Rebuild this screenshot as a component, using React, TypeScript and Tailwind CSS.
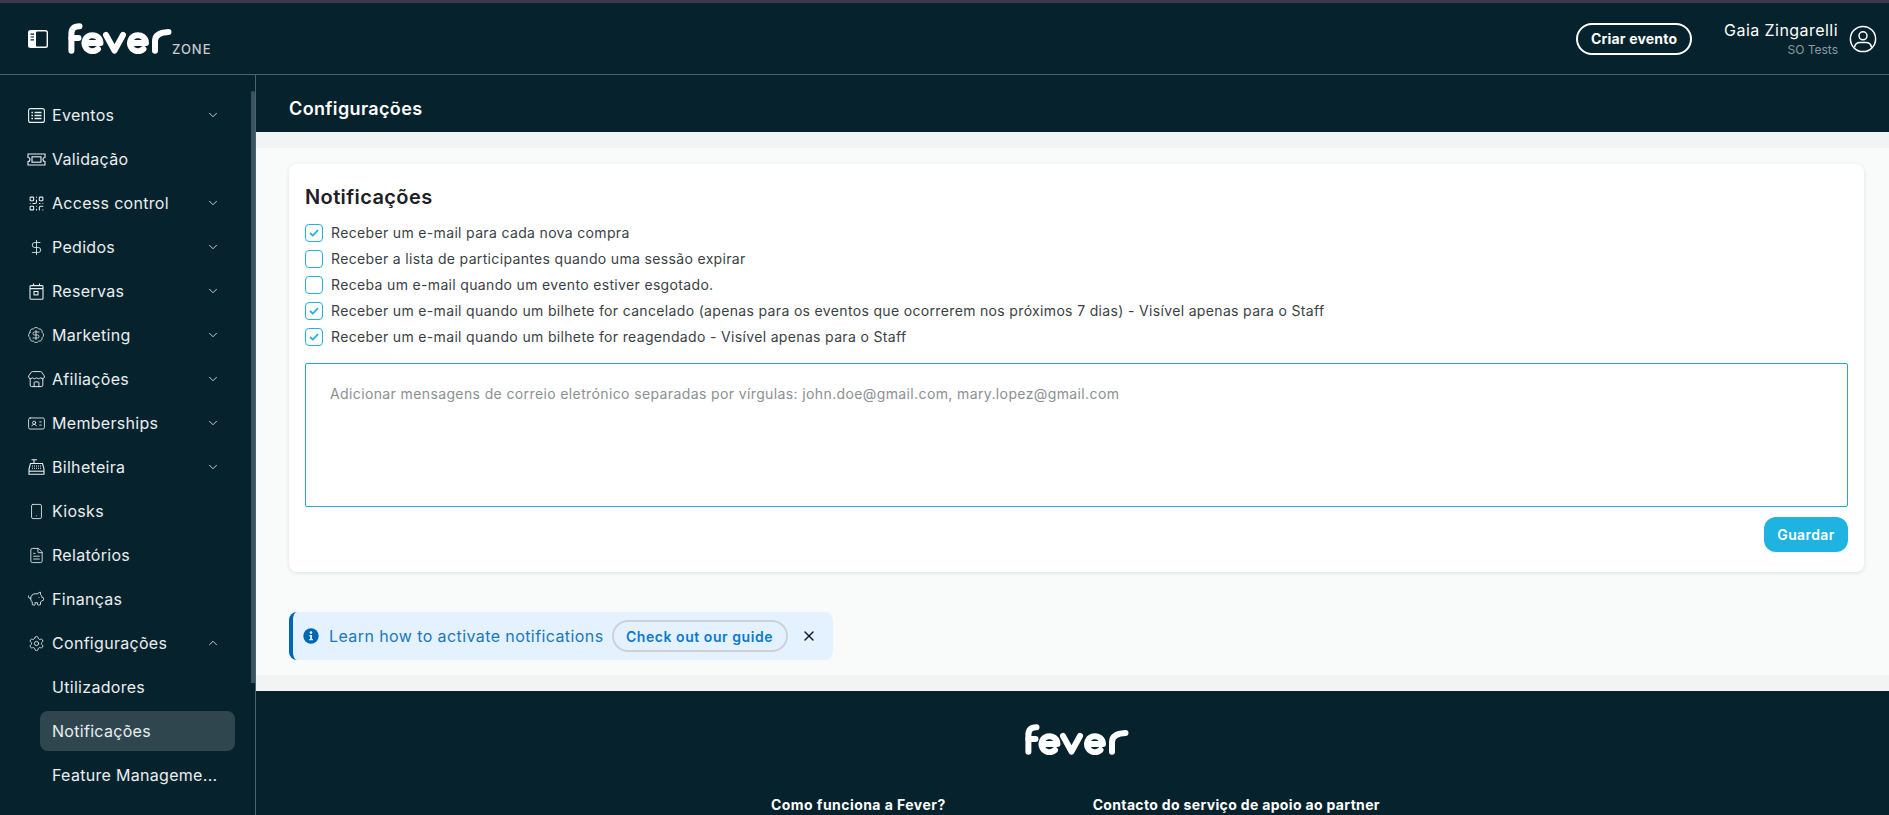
import {
  BadgeDollarSign,
  ChevronDown,
  ChevronUp,
  DollarSign,
  FileText,
  IdCard,
  PiggyBank,
  QrCode,
  Settings,
  Smartphone,
  Store,
  X,
} from "lucide-react";
import type { ReactNode } from "react";

function FeverLogo() {
  return (
    <svg width="104" height="31" viewBox="0 0 104 31" fill="none" stroke="white" strokeWidth="6" strokeLinecap="round" strokeLinejoin="round">
      <path d="M3.4 27.8 V11 C3.4 5 6.5 3.2 11.5 3.2" />
      <path d="M3.4 15 H10.5" />
      <path d="M16.5 20 H32.5 A8 8 0 1 0 30 26" />
      <path d="M38 12 L46.5 27.5 L55 12" />
      <path d="M62 20 H78 A8 8 0 1 0 75.5 26" />
      <path d="M87 27.8 V18 C87 12.5 91 9.5 100.5 9" />
    </svg>
  );
}

function SidebarToggle() {
  return (
    <svg width="20" height="18" viewBox="0 0 20 18" fill="none">
      <rect x="0" y="0" width="20" height="18" rx="2.5" fill="white" />
      <rect x="8" y="1.4" width="10.6" height="15.2" rx="1.2" fill="#06232d" />
      <path d="M2.5 4.2H6M2.5 7H6M2.5 9.8H6" stroke="#06232d" strokeWidth="1.2" />
    </svg>
  );
}

function ListIcon() {
  return (
    <svg width="17" height="15" viewBox="0 0 17 15" fill="none" stroke="currentColor" strokeWidth="1.1">
      <rect x="0.6" y="0.6" width="15.8" height="13.8" rx="2" />
      <path d="M3.4 4.5H5M3.4 7.5H5M3.4 10.5H5M6.5 4.5H13.5M6.5 7.5H13.5M6.5 10.5H13.5" strokeWidth="1.6" />
    </svg>
  );
}

function TicketIcon() {
  return (
    <svg width="19" height="13" viewBox="0 0 19 13" fill="none" stroke="currentColor" strokeWidth="1.1">
      <path d="M1 1H18V4.5A2 2 0 0 0 18 8.5V12H1V8.5A2 2 0 0 0 1 4.5Z" />
      <rect x="5" y="3.8" width="9" height="5.4" />
    </svg>
  );
}

function CalendarIcon() {
  return (
    <svg width="15" height="17" viewBox="0 0 15 17" fill="none" stroke="currentColor" strokeWidth="1.1">
      <rect x="1" y="2.6" width="13" height="13.6" rx="1" />
      <path d="M1 5.6H14M4.5 0.5V3M10.5 0.5V3" />
      <rect x="5" y="8.5" width="4" height="3.4" />
    </svg>
  );
}

function RegisterIcon() {
  return (
    <svg width="17" height="16" viewBox="0 0 17 16" fill="none" stroke="currentColor" strokeWidth="1.1">
      <path d="M3.5 0.8H9M6 0.8V4.5" />
      <path d="M2.5 4.5H14.5L16 10V15.2H1V10Z" />
      <path d="M1 12.2H16" />
      <path d="M4 7H13M4 9.3H13" strokeDasharray="1 1" />
    </svg>
  );
}

function UserIcon() {
  return (
    <svg width="28" height="28" viewBox="0 0 28 28" fill="none" stroke="white" strokeWidth="1.5">
      <circle cx="14" cy="14" r="12.6" />
      <circle cx="14" cy="10.8" r="4" />
      <path d="M5.5 22.5C6 19 8.5 17.6 11 17.6H17C19.5 17.6 22 19 22.5 22.5" />
    </svg>
  );
}

function InfoDot() {
  return (
    <svg width="16" height="16" viewBox="0 0 16 16">
      <circle cx="8" cy="8" r="7.7" fill="#0067b5" />
      <circle cx="8" cy="4.6" r="1.3" fill="#e3f2fe" />
      <path d="M6.4 7H9V11H10V12.2H6.2V11H7.2V8.2H6.4Z" fill="#e3f2fe" />
    </svg>
  );
}

function NavItem({ icon, label, open, chevron }: { icon?: ReactNode; label: string; open?: boolean; chevron?: boolean }) {
  return (
    <div className="flex h-11 items-center">
      <div className="flex w-[52px] shrink-0 justify-center pl-6 pr-[4px] text-[#e9eef0]">{icon}</div>
      <span className="text-[16px] tracking-[0.3px] text-[#e9eef0]">{label}</span>
      {chevron && (
        <div className="ml-auto mr-[35px] text-[#dfe5e8]">
          {open ? <ChevronUp size={14} strokeWidth={1.5} /> : <ChevronDown size={14} strokeWidth={1.5} />}
        </div>
      )}
    </div>
  );
}

function SubItem({ label, active }: { label: string; active?: boolean }) {
  if (active) {
    return (
      <div className="my-[2px] ml-10 mr-5 flex h-10 items-center rounded-lg bg-[#30464f] pl-3">
        <span className="text-[16px] tracking-[0.3px] text-[#e9eef0]">{label}</span>
      </div>
    );
  }
  return (
    <div className="flex h-11 items-center pl-[52px] pr-[18px]">
      <span className="truncate text-[16px] tracking-[0.3px] text-[#e9eef0]">{label}</span>
    </div>
  );
}

function Sidebar() {
  return (
    <aside className="relative w-[256px] shrink-0 overflow-hidden border-r border-[#4b636c] pt-[18px]">
      <NavItem icon={<ListIcon />} label="Eventos" chevron />
      <NavItem icon={<TicketIcon />} label="Validação" />
      <NavItem icon={<QrCode size={17} strokeWidth={1.5} />} label="Access control" chevron />
      <NavItem icon={<DollarSign size={17} strokeWidth={1.2} />} label="Pedidos" chevron />
      <NavItem icon={<CalendarIcon />} label="Reservas" chevron />
      <NavItem icon={<BadgeDollarSign size={18} strokeWidth={1.1} />} label="Marketing" chevron />
      <NavItem icon={<Store size={19} strokeWidth={1.2} />} label="Afiliações" chevron />
      <NavItem icon={<IdCard size={19} strokeWidth={1.1} />} label="Memberships" chevron />
      <NavItem icon={<RegisterIcon />} label="Bilheteira" chevron />
      <NavItem icon={<Smartphone size={17} strokeWidth={1.2} />} label="Kiosks" />
      <NavItem icon={<FileText size={17} strokeWidth={1.2} />} label="Relatórios" />
      <NavItem icon={<PiggyBank size={18} strokeWidth={1.2} />} label="Finanças" />
      <NavItem icon={<Settings size={17} strokeWidth={1.2} />} label="Configurações" open chevron />
      <SubItem label="Utilizadores" />
      <SubItem label="Notificações" active />
      <SubItem label="Feature Manageme..." />
      {/* scrollbar thumb */}
      <div className="absolute right-0 top-[16px] h-[592px] w-[4px] rounded-t bg-[#3b5260]" />
    </aside>
  );
}

const options = [
  { label: "Receber um e-mail para cada nova compra", checked: true },
  { label: "Receber a lista de participantes quando uma sessão expirar", checked: false },
  { label: "Receba um e-mail quando um evento estiver esgotado.", checked: false },
  { label: "Receber um e-mail quando um bilhete for cancelado (apenas para os eventos que ocorrerem nos próximos 7 dias) - Visível apenas para o Staff", checked: true },
  { label: "Receber um e-mail quando um bilhete for reagendado - Visível apenas para o Staff", checked: true },
];

function OptionRow({ label, checked }: { label: string; checked: boolean }) {
  return (
    <div className="flex h-[26px] items-center gap-2">
      <div className="flex h-[18px] w-[18px] items-center justify-center rounded-[4px] border border-[#1eb3e0] bg-white">
        {checked && (
          <svg width="10" height="8" viewBox="0 0 10 8" fill="none" stroke="#1eb3e0" strokeWidth="1.8">
            <path d="M1 4L3.8 6.6L9 1.2" />
          </svg>
        )}
      </div>
      <span className="-mt-[2px] text-[14px] tracking-[0.34px] text-[#3a3f45]">{label}</span>
    </div>
  );
}

function NotificationsCard() {
  return (
    <section className="rounded-lg bg-white px-4 pb-5 pt-[21px] shadow-[0_1px_4px_rgba(6,35,45,0.12)]">
      <h2 className="text-[20px] font-semibold leading-6 tracking-[0.4px] text-[#1c2025]">Notificações</h2>
      <div className="mt-[11px]">
        {options.map((o) => (
          <OptionRow key={o.label} label={o.label} checked={o.checked} />
        ))}
      </div>
      <textarea
        readOnly
        className="mt-[13px] block h-[144px] w-full resize-none rounded-[2px] border border-[#2aa6cb] px-6 py-[18px] text-[14px] leading-6 tracking-[0.38px] outline-none placeholder:text-[#8b9094]"
        placeholder="Adicionar mensagens de correio eletrónico separadas por vírgulas: john.doe@gmail.com, mary.lopez@gmail.com"
      />
      <div className="mt-[10px] flex justify-end">
        <button className="h-[35px] w-[84px] rounded-xl bg-[#1eb3e0] text-[14px] font-semibold tracking-[0.4px] text-white">Guardar</button>
      </div>
    </section>
  );
}

function GuideBanner() {
  return (
    <div className="mt-10 flex h-12 w-[544px] items-center rounded-lg border-l-4 border-[#0067b5] bg-[#e3f2fe] pl-[10px]">
      <InfoDot />
      <span className="ml-[10px] text-[16px] tracking-[0.41px] text-[#1a78bd]">Learn how to activate notifications</span>
      <button className="ml-2 flex h-8 w-[176px] items-center justify-center rounded-full border-2 border-[#cdd0d8] text-[14px] font-semibold tracking-[0.55px] text-[#0b79d0]">
        Check out our guide
      </button>
      <X size={16} strokeWidth={2} className="ml-[13px] text-[#111827]" />
    </div>
  );
}

export default function App() {
  return (
    <div className="flex h-screen flex-col overflow-hidden bg-[#06232d] font-['Inter',sans-serif]">
      <div className="h-[3px] shrink-0 bg-[#3d394f]" />
      <header className="flex h-[72px] shrink-0 items-center border-b border-[#4b636c] pl-7 pr-3">
        <SidebarToggle />
        <div className="ml-5 flex items-end">
          <FeverLogo />
          <span className="text-[13px] font-medium leading-[9px] tracking-[1px] text-[#c6ccd0]">ZONE</span>
        </div>
        <button className="ml-auto h-8 w-[116px] rounded-full border-2 border-white text-[14px] font-bold tracking-[0.2px] text-white">
          Criar evento
        </button>
        <div className="ml-[32px] mr-[11px] flex flex-col items-end">
          <span className="text-[16px] leading-5 tracking-[0.45px] text-white">Gaia Zingarelli</span>
          <span className="mt-[2px] text-[12px] leading-4 text-[#8a9aa3]">SO Tests</span>
        </div>
        <UserIcon />
      </header>
      <div className="flex min-h-0 flex-1">
        <Sidebar />
        <main className="flex min-w-0 flex-1 flex-col">
          <div className="flex h-[57px] shrink-0 items-center pl-[33px] pt-[10px]">
            <h1 className="text-[18px] font-semibold tracking-[0.37px] text-white">Configurações</h1>
          </div>
          <div className="shrink-0 bg-[#f2f4f4] py-4">
            <div className="h-[527px] bg-[#f9fbfb] px-[33px] pr-[25px] pt-4">
              <NotificationsCard />
              <GuideBanner />
            </div>
          </div>
          <footer className="flex flex-col items-center pl-[9px] pt-[33px]">
            <FeverLogo />
          </footer>
          <div className="mt-[39px] flex pl-[515px]">
            <span className="text-[14px] font-bold tracking-[0.45px] text-white">Como funciona a Fever?</span>
            <span className="ml-[147px] text-[14px] font-bold tracking-[0.34px] text-white">Contacto do serviço de apoio ao partner</span>
          </div>
        </main>
      </div>
    </div>
  );
}
